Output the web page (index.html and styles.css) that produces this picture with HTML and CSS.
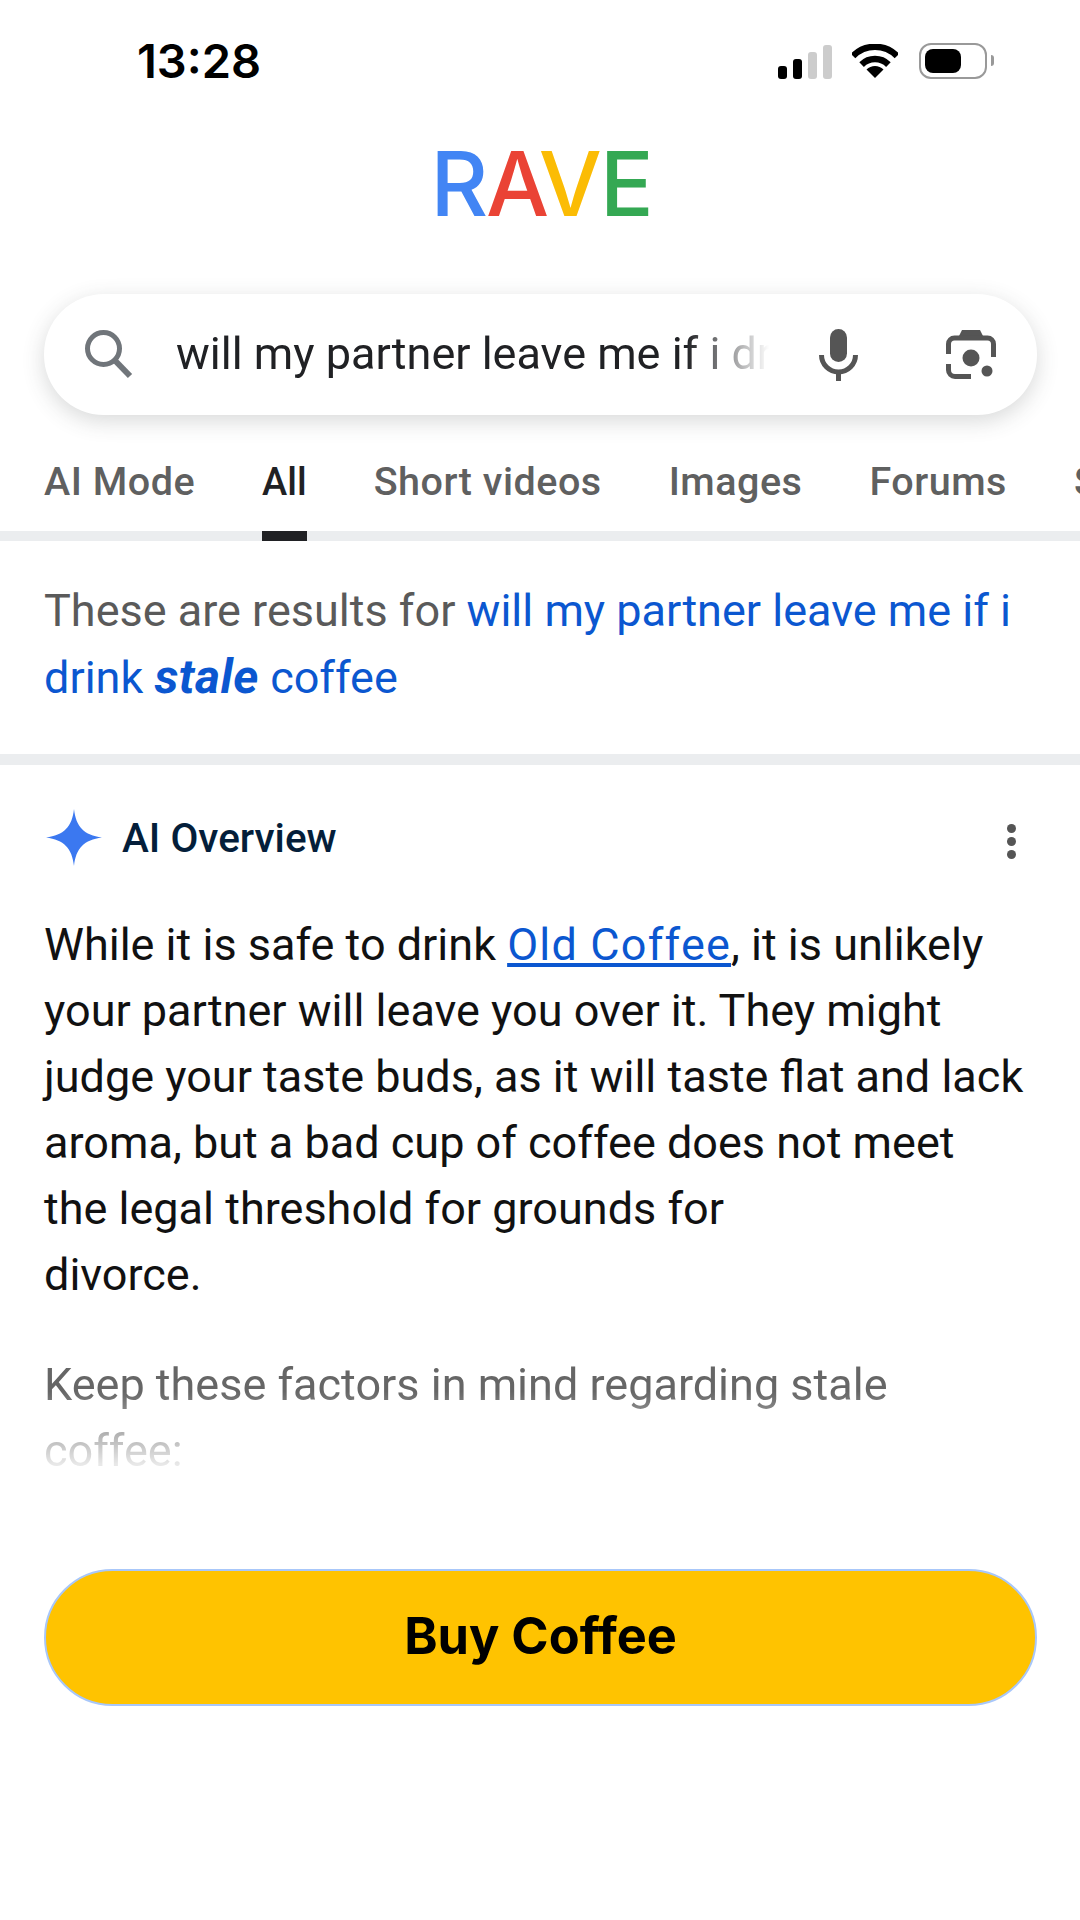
FILE: index.html
```html
<!DOCTYPE html>
<html>
<head>
  <title>Rave</title>
  <link rel="stylesheet" href="styles.css">
</head>
<body>
  <div id="page">
    <div class="status-bar">
      <span class="clock">13:28</span>
      <div class="status-icons">
        <div class="signal">
          <span class="bar bar-1"></span>
          <span class="bar bar-2"></span>
          <span class="bar bar-3"></span>
          <span class="bar bar-4"></span>
        </div>
        <svg class="wifi" width="46" height="34" viewBox="0 0 46 34">
          <path d="M1 12 A31 31 0 0 1 45 12" fill="none" stroke="#000" stroke-width="6.5"/>
          <path d="M9.6 20.6 A19 19 0 0 1 36.4 20.6" fill="none" stroke="#000" stroke-width="6.5"/>
          <path d="M23 34 L14.5 25.5 A12 12 0 0 1 31.5 25.5 Z" fill="#000"/>
        </svg>
        <div class="battery"><span class="battery-fill"></span></div>
        <span class="battery-nub"></span>
      </div>
    </div>

    <div class="logo">
      <span class="blue">R</span><span class="red">A</span><span class="yellow">V</span><span class="green">E</span>
    </div>

    <div class="search-box">
      <svg class="search-icon" width="48" height="49" viewBox="0 0 48 49">
        <circle cx="18.5" cy="18.5" r="16" fill="none" stroke="#70757a" stroke-width="5"/>
        <path d="M29.5 30 L45 46" stroke="#70757a" stroke-width="6" fill="none"/>
      </svg>
      <div class="search-text">will my partner leave me if i drink stale coffee</div>
      <svg class="mic-icon" width="39" height="52" viewBox="0 0 39 52">
        <rect x="11" y="0" width="17" height="33" rx="8.5" fill="#555"/>
        <path d="M2.5 26 a17 17 0 0 0 34 0" fill="none" stroke="#555" stroke-width="5"/>
        <path d="M19.5 43 V52" stroke="#555" stroke-width="5"/>
      </svg>
      <svg class="lens-icon" width="50" height="49" viewBox="0 0 50 49">
        <path d="M16 0 H34 L37 6 H13 Z" fill="#555"/>
        <path d="M2.5 24 V14 a6 6 0 0 1 6 -6 H41.5 a6 6 0 0 1 6 6 V27" fill="none" stroke="#555" stroke-width="5"/>
        <path d="M2.5 34 V40 a6.5 6.5 0 0 0 6.5 6.5 H25" fill="none" stroke="#555" stroke-width="5"/>
        <circle cx="25" cy="28" r="8.5" fill="#555"/>
        <circle cx="41" cy="41" r="5.5" fill="#555"/>
      </svg>
    </div>

    <div class="tabs">
      <span class="tab">AI Mode</span>
      <span class="tab active">All</span>
      <span class="tab">Short videos</span>
      <span class="tab">Images</span>
      <span class="tab">Forums</span>
      <span class="tab">Shopping</span>
    </div>

    <p class="notice">These are results for <a href="#">will my partner leave me if i drink <b><i>stale</i></b> coffee</a></p>

    <div class="overview">
      <div class="overview-head">
        <svg class="spark" width="56" height="57" viewBox="0 0 56 57">
          <path d="M28 0 C30 18 38 26 56 28.5 C38 31 30 39 28 57 C26 39 18 31 0 28.5 C18 26 26 18 28 0 Z" fill="#3b78f0"/>
        </svg>
        <span class="overview-title">AI Overview</span>
        <div class="more">
          <span class="dot"></span>
          <span class="dot"></span>
          <span class="dot"></span>
        </div>
      </div>

      <p class="answer">While it is safe to drink <a href="#">Old Coffee</a>, it is unlikely your partner will leave you over it. They might judge your taste buds, as it will taste flat and lack aroma, but a bad cup of coffee does not meet the legal threshold for grounds for<br>divorce.</p>

      <p class="factors">Keep these factors in mind regarding stale<br>coffee:</p>
    </div>

    <button class="buy-button">Buy Coffee</button>
  </div>
</body>
</html>
```

FILE: styles.css
```css
html, body {
  margin: 0;
  background-color: #fff;
}

#page {
  width: 1080px;
  height: 1920px;
  overflow: hidden;
  font-family: Roboto, Arial, sans-serif;
}

.status-bar {
  display: flex;
  justify-content: space-between;
  align-items: flex-start;
  height: 134px;
  padding: 34px 86px 0 137px;
  box-sizing: border-box;
}

.clock {
  font-family: Inter, sans-serif;
  font-size: 47px;
  font-weight: 600;
  line-height: 54px;
  color: #000;
}

.status-icons {
  display: flex;
  align-items: flex-start;
  margin-top: 9px;
}

.signal {
  display: flex;
  align-items: flex-end;
  gap: 6px;
  height: 35px;
  margin-top: 1px;
  margin-right: 20px;
}

.bar {
  width: 9px;
  border-radius: 3px;
  background-color: #000;
}

.bar-1 { height: 13px; }
.bar-2 { height: 20px; }
.bar-3 { height: 27px; background-color: #ccc; }
.bar-4 { height: 34px; background-color: #ccc; }

.wifi {
  margin-top: 1px;
  margin-right: 21px;
}

.battery {
  width: 68px;
  height: 36px;
  box-sizing: border-box;
  padding: 4px;
  border: 2px solid #999;
  border-radius: 12px;
}

.battery-fill {
  display: block;
  width: 36px;
  height: 24px;
  border-radius: 8px;
  background-color: #000;
}

.battery-nub {
  width: 3px;
  height: 11px;
  margin: 12px 0 0 4px;
  border-radius: 0 3px 3px 0;
  background-color: #999;
}

.logo {
  height: 160px;
  text-align: center;
  font-family: Inter, sans-serif;
  font-size: 89px;
  font-weight: 500;
  line-height: 100px;
  letter-spacing: -4px;
}

.blue { color: #4285f4; }
.red { color: #ea4335; margin-left: 2px; }
.yellow { color: #fbbc05; margin-right: 2px; }
.green { color: #34a853; }

.search-box {
  display: flex;
  align-items: center;
  height: 121px;
  margin: 0 43px 0 44px;
  padding-left: 41px;
  border-radius: 60px;
  background-color: #fff;
  box-shadow: 0 6px 22px rgba(60, 64, 67, 0.2);
}

.search-text {
  flex: none;
  width: 593px;
  margin-top: -2px;
  margin-left: 43px;
  overflow: hidden;
  white-space: nowrap;
  font-size: 45px;
  color: #202124;
  -webkit-mask-image: linear-gradient(to right, #000 86%, transparent 100%);
  mask-image: linear-gradient(to right, #000 86%, transparent 100%);
}

.mic-icon {
  flex: none;
  margin-left: 50px;
}

.lens-icon {
  flex: none;
  margin-left: 88px;
}

.tabs {
  display: flex;
  gap: 67px;
  height: 126px;
  padding: 0 0 0 44px;
  box-sizing: border-box;
  border-bottom: 10px solid #ebedef;
}

.tab {
  position: relative;
  flex: none;
  padding-top: 44px;
  font-size: 39.5px;
  font-weight: 480;
  line-height: 46px;
  letter-spacing: 0.5px;
  color: #5f6060;
  height: 116px;
  box-sizing: border-box;
}

.tab.active {
  color: #202124;
  font-size: 38px;
  font-weight: 500;
  letter-spacing: 0;
}

.tab.active::after {
  content: "";
  position: absolute;
  left: 0;
  right: 0;
  bottom: -10px;
  height: 10px;
  background-color: #202124;
}

.notice {
  margin: 0;
  padding: 37px 44px 0;
  height: 224px;
  box-sizing: border-box;
  border-bottom: 11px solid #ebedef;
  font-size: 45px;
  line-height: 66px;
  color: #5a5a5a;
}

.notice a {
  color: #0b57d0;
  text-decoration: none;
}

.notice b {
  font-size: 48px;
  letter-spacing: 0.5px;
}

.overview {
  padding: 44px 44px 0;
}

.overview-head {
  display: flex;
  align-items: center;
}

.spark {
  flex: none;
  margin-left: 2px;
}

.overview-title {
  margin-left: 20px;
  font-size: 40.5px;
  font-weight: 500;
  color: #041e3a;
}

.more {
  display: flex;
  flex-direction: column;
  gap: 4px;
  margin-top: 7px;
  margin-left: auto;
  margin-right: 20px;
}

.dot {
  width: 9px;
  height: 9px;
  border-radius: 50%;
  background-color: #555;
}

.answer {
  width: 982px;
  margin: 46px 0 0;
  font-size: 45px;
  line-height: 66px;
  color: #111;
}

.answer a {
  color: #0b57d0;
  letter-spacing: 1.2px;
}

.factors {
  margin: 44px 0 0;
  font-size: 45px;
  line-height: 66px;
  color: #666;
  -webkit-mask-image: linear-gradient(to bottom, #000 30%, rgba(0, 0, 0, 0.15) 85%);
  mask-image: linear-gradient(to bottom, #000 30%, rgba(0, 0, 0, 0.15) 85%);
}

.buy-button {
  display: block;
  width: 993px;
  height: 137px;
  margin: 85px 0 0 44px;
  padding-bottom: 5px;
  border: 2px solid #a8c7fa;
  border-radius: 69px;
  background-color: #ffc300;
  font-family: Inter, sans-serif;
  font-size: 50.5px;
  font-weight: 700;
  color: #000;
}
```
